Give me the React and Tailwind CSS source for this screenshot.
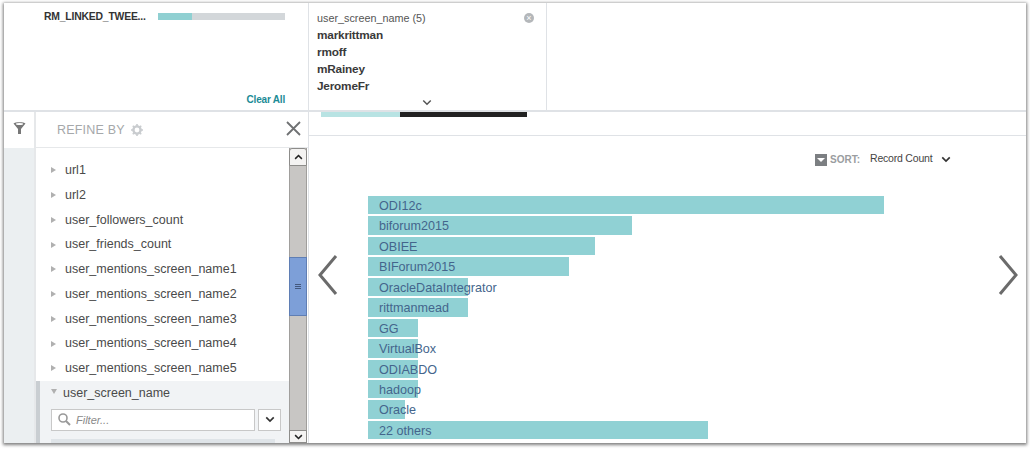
import React from 'react';

const fields = [
  'url1',
  'url2',
  'user_followers_count',
  'user_friends_count',
  'user_mentions_screen_name1',
  'user_mentions_screen_name2',
  'user_mentions_screen_name3',
  'user_mentions_screen_name4',
  'user_mentions_screen_name5',
];

const bars = [
  { label: 'ODI12c', width: 516 },
  { label: 'biforum2015', width: 264 },
  { label: 'OBIEE', width: 227 },
  { label: 'BIForum2015', width: 201 },
  { label: 'OracleDataIntegrator', width: 100 },
  { label: 'rittmanmead', width: 100 },
  { label: 'GG', width: 50 },
  { label: 'VirtualBox', width: 50 },
  { label: 'ODIABDO', width: 50 },
  { label: 'hadoop', width: 50 },
  { label: 'Oracle', width: 37 },
  { label: '22 others', width: 340 },
];

const Chevron = ({ className, strokeWidth = 2 }) => (
  <svg className={className} viewBox="0 0 12 8" fill="none" stroke="currentColor" strokeWidth={strokeWidth}>
    <path d="M1.5 1.5 L6 6 L10.5 1.5" />
  </svg>
);

const Gear = () => (
  <svg className="w-[14px] h-[14px] ml-[5px] text-[#c9cccf]" viewBox="0 0 14 14" fill="none">
    <circle cx="7" cy="7" r="3.6" stroke="currentColor" strokeWidth="2.4" />
    <path d="M7 1v2M7 11v2M1 7h2M11 7h2M2.8 2.8l1.4 1.4M9.8 9.8l1.4 1.4M2.8 11.2l1.4-1.4M9.8 4.2l1.4-1.4" stroke="currentColor" strokeWidth="1.6" />
  </svg>
);

const App = () => {
  return (
    <div className="w-[1030px] h-[450px] bg-white overflow-hidden pt-[3px] pl-[4px] font-['Liberation_Sans',Arial,sans-serif]">
      <div className="w-[1022px] h-[440px] bg-white flex flex-col overflow-hidden shadow-[0_1px_3px_1px_rgba(0,0,0,0.5)]">

        {/* Top strip */}
        <div className="h-[109px] flex shrink-0 border-b-2 border-[#dfe2e6]">
          <div className="w-[304px] shrink-0 pt-[7px] pr-[23px] flex flex-col">
            <div className="flex items-center h-[13px]">
              <span className="ml-[40px] w-[114px] text-[10.4px] leading-[13px] font-bold text-[#333] tracking-[-0.2px] whitespace-nowrap">RM_LINKED_TWEE...</span>
              <div className="w-[127px] h-[7px] bg-[#d3d7da] flex">
                <div className="w-[34px] bg-[#90d0d2]"></div>
              </div>
            </div>
            <div className="mt-auto mb-[4px] text-right text-[10px] leading-[13px] font-bold text-[#1b8b96] tracking-[-0.2px]">Clear All</div>
          </div>
          <div className="w-[239px] shrink-0 border-x border-[#dfe2e6] pl-[8px] pr-[12px] pt-[9px] relative">
            <div className="flex justify-between items-center h-[12px]">
              <span className="text-[10.8px] leading-[12px] text-[#555]">user_screen_name (5)</span>
              <span className="w-[10px] h-[10px] rounded-full bg-[#b4b7ba] flex items-center justify-center text-white text-[9px] leading-none">×</span>
            </div>
            <div className="mt-[3px] text-[11.8px] leading-[17px] font-bold text-[#3a3a3a] tracking-[-0.2px]">
              <div>markrittman</div>
              <div>rmoff</div>
              <div>mRainey</div>
              <div>JeromeFr</div>
            </div>
            <Chevron className="w-[10px] h-[7px] ml-[105px] mt-[4px] text-[#555]" strokeWidth={1.8} />
          </div>
        </div>

        <div className="flex flex-1 min-h-0">
          {/* Filter rail */}
          <div className="w-[32px] shrink-0 flex flex-col border-r-2 border-[#e6e8ea]">
            <div className="h-[36px] bg-white flex justify-center pt-[10px]">
              <svg className="w-[13px] h-[13px] text-[#777]" viewBox="0 0 13 13" fill="currentColor">
                <path d="M0.5 1.5 C2 -0.2 11 -0.2 12.5 1.5 L8 7 L8 12 L5 12 L5 7 Z" />
                <ellipse cx="6.5" cy="2" rx="3.6" ry="1" fill="#fff" />
              </svg>
            </div>
            <div className="flex-1 bg-[#ebeff1]"></div>
          </div>

          {/* Refine panel */}
          <div className="w-[273px] shrink-0 flex flex-col border-r border-[#dfe2e6]">
            <div className="h-[36px] shrink-0 border-b border-[#e6e8ea] flex items-center pl-[21px] pr-[7px]">
              <span className="text-[12.5px] text-[#a5a8aa] tracking-[0.2px] mt-[1px]">REFINE BY</span>
              <Gear />
              <svg className="w-[15px] h-[15px] ml-auto -mt-[3px] text-[#6f7173]" viewBox="0 0 15 15" fill="none" stroke="currentColor" strokeWidth="1.8">
                <path d="M1 1 L14 14 M14 1 L1 14" />
              </svg>
            </div>
            <div className="flex-1 min-h-0 flex">
              <div className="flex-1 min-w-0 overflow-hidden">
                <div className="pt-[10px]">
                  {fields.map((name) => (
                    <div key={name} className="h-[24.75px] flex items-center pl-[15px] text-[12.5px] text-[#4a4a4a]">
                      <span className="w-0 h-0 border-y-[3.5px] border-y-transparent border-l-[5px] border-l-[#b0b0b0] mr-[9px]"></span>
                      {name}
                    </div>
                  ))}
                </div>
                <div className="bg-[#f1f3f5] border-l-4 border-[#c9ced2] pl-[11px] pr-[8px] h-[70px]">
                  <div className="h-[25px] flex items-center text-[12.5px] text-[#4a4a4a]">
                    <span className="w-0 h-0 border-x-[3.5px] border-x-transparent border-t-[5px] border-t-[#b0b0b0] mr-[6px] -mt-[3px]"></span>
                    user_screen_name
                  </div>
                  <div className="flex gap-[3px] mt-[3px]">
                    <div className="flex-1 h-[22px] bg-white border border-[#c8c8c8] flex items-center pl-[5px]">
                      <svg className="w-[15px] h-[15px] text-[#999]" viewBox="0 0 15 15" fill="none" stroke="currentColor">
                        <circle cx="6" cy="6" r="4" strokeWidth="1.6" />
                        <path d="M9 9 L13 13" strokeWidth="2" />
                      </svg>
                      <span className="ml-[4px] text-[11px] italic text-[#8a8a8a]">Filter...</span>
                    </div>
                    <div className="w-[23px] h-[22px] bg-white border border-[#c8c8c8] flex items-center justify-center">
                      <Chevron className="w-[10px] h-[7px] text-[#333]" />
                    </div>
                  </div>
                  <div className="h-[8px] mt-[8px] mr-[6px] bg-[#dfe4e8]"></div>
                </div>
              </div>

              {/* Scrollbar */}
              <div className="w-[18px] mr-[1px] shrink-0 bg-[#c8c6c4] border-x border-[#a09e9c] flex flex-col">
                <div className="h-[18px] bg-[#f4f3f2] border border-[#8d8c8a] rounded-t-[3px] -mx-px flex items-center justify-center">
                  <Chevron className="w-[9px] h-[6px] text-[#222] rotate-180" />
                </div>
                <div className="h-[59px] mt-[91px] -mx-px bg-[#7d9fd8] border border-[#5f7eb4] flex flex-col items-center justify-center gap-[1px]">
                  <div className="w-[6px] h-[1px] bg-[#43587e]"></div>
                  <div className="w-[6px] h-[1px] bg-[#43587e]"></div>
                  <div className="w-[6px] h-[1px] bg-[#43587e]"></div>
                </div>
                <div className="mt-auto h-[13px] bg-[#f4f3f2] border border-[#8d8c8a] -mx-px flex items-center justify-center">
                  <Chevron className="w-[9px] h-[6px] text-[#222]" />
                </div>
              </div>
            </div>
          </div>

          {/* Main */}
          <div className="flex-1 min-w-0 flex flex-col">
            <div className="h-[24px] shrink-0 border-b border-[#dfe2e6]">
              <div className="flex h-[5px] ml-[12px]">
                <div className="w-[79px] bg-[#b8e3e3]"></div>
                <div className="w-[127px] bg-[#222]"></div>
              </div>
            </div>
            <div className="flex-1 min-h-0 relative">
              <div className="flex items-center h-[14px] mt-[16px] ml-[506px]">
                <span className="w-[12px] h-[12px] bg-[#7c7f82] flex items-center justify-center mt-[1px]">
                  <span className="w-0 h-0 border-x-[4px] border-x-transparent border-t-[4px] border-t-white mt-[1px]"></span>
                </span>
                <span className="ml-[3px] text-[10px] font-bold text-[#9a9da0]">SORT:</span>
                <span className="ml-[10px] text-[10.5px] text-[#444] tracking-[-0.2px]">Record Count</span>
                <Chevron className="w-[10px] h-[7px] ml-[9px] text-[#333]" />
              </div>
              <div className="mt-[30px] ml-[59px] flex flex-col gap-[2px]">
                {bars.map((bar) => (
                  <div key={bar.label} className="h-[18.45px]">
                    <div className="h-[18.45px] bg-[#90d1d4] pl-[11px] text-[12.6px] leading-[20px] text-[#44658c] whitespace-nowrap" style={{ width: bar.width }}>
                      {bar.label}
                    </div>
                  </div>
                ))}
              </div>
              <svg className="absolute left-[8px] top-[117px] w-[22px] h-[44px] text-[#6b6b6b]" viewBox="0 0 22 44" fill="none" stroke="currentColor" strokeWidth="3">
                <path d="M19 3 L3 22 L19 41" />
              </svg>
              <svg className="absolute left-[688px] top-[117px] w-[22px] h-[44px] text-[#6b6b6b]" viewBox="0 0 22 44" fill="none" stroke="currentColor" strokeWidth="3">
                <path d="M3 3 L19 22 L3 41" />
              </svg>
            </div>
          </div>
        </div>
      </div>
    </div>
  );
};

export default App;
